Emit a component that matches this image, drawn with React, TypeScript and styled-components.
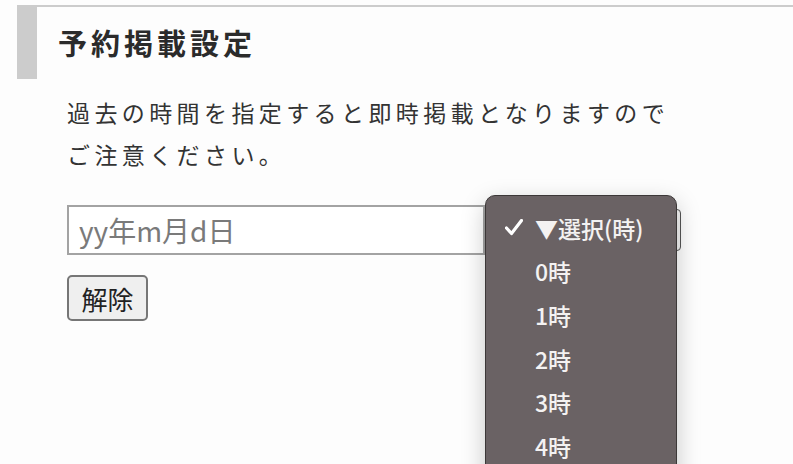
import styled, { createGlobalStyle } from 'styled-components';

const GlobalStyle = createGlobalStyle`
  html, body {
    margin: 0;
    padding: 0;
    background: #fdfdfd;
  }
  body {
    font-family: "Noto Sans CJK JP", "Noto Sans", sans-serif;
    color: #333;
    height: 464px;
    overflow: hidden;
  }
`;

const Section = styled.section`
  margin: 5px 0 0 17px;
  border-top: 2px solid #cccccc;
`;

const Heading = styled.h2`
  margin: -2px 0 0;
  height: 74px;
  display: flex;
  align-items: center;
  border-left: 20px solid #cccccc;
  padding-left: 21px;
  font-size: 29px;
  font-weight: 700;
  letter-spacing: 4px;
  color: #2b2b2b;
`;

const Body = styled.div`
  padding: 12px 0 0 50px;
`;

const Note = styled.p`
  margin: 0;
  font-size: 23px;
  line-height: 42px;
  letter-spacing: 4.4px;
  color: #333;
`;

const Row = styled.div`
  display: flex;
  align-items: center;
  gap: 4px;
  margin-top: 30px;
`;

const DateInput = styled.input`
  box-sizing: border-box;
  width: 418px;
  height: 50px;
  border: 2px solid #a3a3a3;
  padding: 0 10px;
  font-family: inherit;
  font-size: 28px;
  color: #333;
  background: #fff;
  &::placeholder {
    color: #7a7a7a;
  }
`;

const SelectWrap = styled.div`
  position: relative;
`;

const SelectBox = styled.div`
  box-sizing: border-box;
  width: 192px;
  height: 42px;
  border: 1px solid #555;
  border-radius: 4px;
  background: #f2f2f2;
`;

const Popup = styled.ul`
  position: absolute;
  top: -14px;
  left: -4px;
  width: 192px;
  height: 290px;
  margin: 0;
  padding: 10px 0 0;
  list-style: none;
  box-sizing: border-box;
  background: #6a6264;
  border: 1px solid #3c3838;
  border-radius: 10px;
  box-shadow: 0 8px 24px rgba(0, 0, 0, 0.22);
  overflow: hidden;
`;

const Option = styled.li`
  display: flex;
  align-items: center;
  height: 43.6px;
  padding-left: 19px;
  font-size: 23px;
  font-weight: 500;
  color: #f4f2f2;
`;

const Check = styled.span`
  width: 30px;
  display: flex;
  align-items: center;
`;

const ClearButton = styled.button`
  margin-top: 20px;
  width: 81px;
  height: 46px;
  font-family: inherit;
  font-size: 26px;
  color: #222;
  background: #efefef;
  border: 2px solid #767676;
  border-radius: 5px;
  padding: 0;
`;

// only the options that fit in the open list before it runs off the page
const hours = ['▼選択(時)', '0時', '1時', '2時', '3時', '4時'];

export default function App() {
  return (
    <>
      <GlobalStyle />
      <Section>
        <Heading>予約掲載設定</Heading>
        <Body>
          <Note>
            過去の時間を指定すると即時掲載となりますので
            <br />
            ご注意ください。
          </Note>
          <Row>
            <DateInput placeholder="yy年m月d日" />
            <SelectWrap>
              <SelectBox />
              <Popup>
                {hours.map((h, i) => (
                  <Option key={h}>
                    <Check>
                      {i === 0 && (
                        <svg width="18" height="17" viewBox="0 0 18 17">
                          <path d="M1.5 9 L6.5 14.5 L16.5 1.5" fill="none" stroke="#fff" strokeWidth="3.2" strokeLinecap="round" strokeLinejoin="round" />
                        </svg>
                      )}
                    </Check>
                    {h}
                  </Option>
                ))}
              </Popup>
            </SelectWrap>
          </Row>
          <ClearButton>解除</ClearButton>
        </Body>
      </Section>
    </>
  );
}
